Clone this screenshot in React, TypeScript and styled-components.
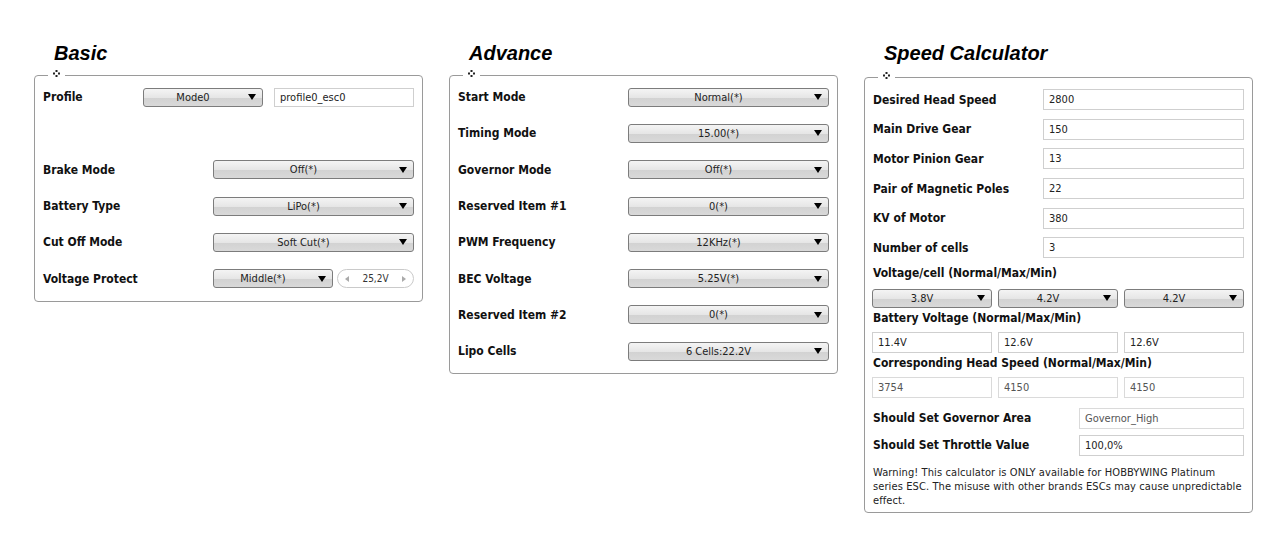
import React, { FC } from "react";
import styled, { createGlobalStyle } from "styled-components";

// global
const GlobalStyle = createGlobalStyle`
	html, body {
		margin: 0;
		padding: 0;
		background: #fff;
	}
	body {
		font-family: "DejaVu Sans Condensed", "DejaVu Sans", Tahoma, sans-serif;
		color: #000;
	}
`;

// layout
const Page = styled.div`
	display: flex;
	align-items: flex-start;
	gap: 26px;
	padding: 41px 0 0 34px;
`;

const Column = styled.section`
	width: 389px;
	display: flex;
	flex-direction: column;
`;

const Title = styled.h2`
	margin: 0 0 0 20px;
	height: 24px;
	line-height: 24px;
	font-family: "Liberation Sans", Arial, sans-serif;
	font-size: 20px;
	font-weight: bold;
	font-style: italic;
	color: #000;
`;

const Panel = styled.fieldset<{ $offset?: number; $padTop?: number }>`
	margin: ${(p) => 7 + (p.$offset || 0)}px 0 0 0;
	padding: ${(p) => p.$padTop ?? 1}px 8px 4px 8px;
	border: 1px solid #9a9a9a;
	border-radius: 4px;
	min-width: 0;
`;

const Legend = styled.legend`
	margin-left: 5px;
	padding: 0 5px;
	height: 6px;
	line-height: 0;

	svg {
		display: block;
		margin-top: -2px;
	}
`;

// rows
const Row = styled.div<{ $h?: number; $top?: number }>`
	display: flex;
	align-items: center;
	height: ${(p) => p.$h || 36.3}px;
	margin-top: ${(p) => p.$top || 0}px;
`;

const Label = styled.div<{ $w?: number }>`
	flex: 0 0 ${(p) => p.$w || 170}px;
	font-size: 12px;
	font-weight: bold;
	color: #111;
	white-space: nowrap;
`;

const Heading = styled.div`
	height: 20px;
	line-height: 20px;
	font-size: 12px;
	font-weight: bold;
	color: #111;
	white-space: nowrap;
`;

const Controls = styled.div<{ $gap?: number }>`
	display: flex;
	align-items: center;
	gap: ${(p) => p.$gap ?? 4}px;
`;

const Triple = styled.div<{ $top?: number }>`
	display: flex;
	gap: 6px;
	margin: ${(p) => p.$top ?? 4}px 0 0 -1px;
`;

// combo box
const Combo = styled.div<{ $w: number }>`
	box-sizing: border-box;
	width: ${(p) => p.$w}px;
	height: 19px;
	display: flex;
	align-items: center;
	border: 1px solid #7c7c7c;
	border-radius: 3px;
	background: linear-gradient(#f4f4f4 0%, #e6e6e6 50%, #d2d2d2 52%, #d9d9d9 100%);
	font-size: 11px;
	color: #222;
`;

const ComboText = styled.span`
	flex: 1;
	text-align: center;
	white-space: nowrap;
`;

const ComboArrow = styled.span`
	width: 0;
	height: 0;
	margin: 0 6px 0 6px;
	border-left: 4px solid transparent;
	border-right: 4px solid transparent;
	border-top: 6px solid #000;
`;

const Select: FC<{ w: number; value: string }> = ({ w, value }) => (
	<Combo $w={w}>
		<ComboText>{value}</ComboText>
		<ComboArrow />
	</Combo>
);

// text box
const TextBox = styled.input<{ $w: number; $h?: number; $muted?: boolean }>`
	box-sizing: border-box;
	width: ${(p) => p.$w}px;
	height: ${(p) => p.$h || 21}px;
	margin: 0;
	padding: 0 0 0 5px;
	border: 1px solid ${(p) => (p.$muted ? "#dadada" : "#cfcfcf")};
	border-radius: 0;
	background: #fff;
	font-family: inherit;
	font-size: 11px;
	color: ${(p) => (p.$muted ? "#555" : "#222")};
	outline: none;
`;

// spinner
const Spin = styled.div`
	box-sizing: border-box;
	width: 77px;
	height: 19px;
	display: flex;
	align-items: center;
	justify-content: space-between;
	padding: 0 7px;
	border: 1px solid #cacaca;
	border-radius: 10px;
	font-size: 10px;
	color: #333;
`;

const SpinArrow = styled.span<{ $dir: "left" | "right" }>`
	width: 0;
	height: 0;
	border-top: 3px solid transparent;
	border-bottom: 3px solid transparent;
	${(p) => (p.$dir === "left" ? "border-right: 4px solid #aaa;" : "border-left: 4px solid #aaa;")}
`;

const Warning = styled.p`
	margin: 7px -7px 0 0;
	font-size: 11px;
	line-height: 14px;
	letter-spacing: 0.1px;
	color: #222;
`;

const Diamond: FC = () => (
	<svg width="7" height="7" viewBox="0 0 7 7">
		<rect x="2.5" y="0" width="2" height="2" fill="#222" />
		<rect x="0" y="2.5" width="2" height="2" fill="#222" />
		<rect x="5" y="2.5" width="2" height="2" fill="#222" />
		<rect x="2.5" y="5" width="2" height="2" fill="#222" />
	</svg>
);

const advanceRows: [string, string][] = [
	["Start Mode", "Normal(*)"],
	["Timing Mode", "15.00(*)"],
	["Governor Mode", "Off(*)"],
	["Reserved Item #1", "0(*)"],
	["PWM Frequency", "12KHz(*)"],
	["BEC Voltage", "5.25V(*)"],
	["Reserved Item #2", "0(*)"],
	["Lipo Cells", "6 Cells:22.2V"],
];

const calcRows: [string, string][] = [
	["Desired Head Speed", "2800"],
	["Main Drive Gear", "150"],
	["Motor Pinion Gear", "13"],
	["Pair of Magnetic Poles", "22"],
	["KV of Motor", "380"],
	["Number of cells", "3"],
];

const App: FC = () => {
	return (
		<>
			<GlobalStyle />
			<Page>
				{/* Basic */}
				<Column>
					<Title>Basic</Title>
					<Panel>
						<Legend>
							<Diamond />
						</Legend>
						<Row>
							<Label $w={100}>Profile</Label>
							<Controls $gap={11}>
								<Select w={120} value="Mode0" />
								<TextBox $w={140} $h={19} readOnly value="profile0_esc0" />
							</Controls>
						</Row>
						<Row />
						<Row>
							<Label>Brake Mode</Label>
							<Select w={201} value="Off(*)" />
						</Row>
						<Row>
							<Label>Battery Type</Label>
							<Select w={201} value="LiPo(*)" />
						</Row>
						<Row>
							<Label>Cut Off Mode</Label>
							<Select w={201} value="Soft Cut(*)" />
						</Row>
						<Row>
							<Label>Voltage Protect</Label>
							<Controls>
								<Select w={120} value="Middle(*)" />
								<Spin>
									<SpinArrow $dir="left" />
									<span>25,2V</span>
									<SpinArrow $dir="right" />
								</Spin>
							</Controls>
						</Row>
					</Panel>
				</Column>

				{/* Advance */}
				<Column>
					<Title>Advance</Title>
					<Panel>
						<Legend>
							<Diamond />
						</Legend>
						{advanceRows.map(([label, value]) => (
							<Row key={label}>
								<Label>{label}</Label>
								<Select w={201} value={value} />
							</Row>
						))}
					</Panel>
				</Column>

				{/* Speed Calculator */}
				<Column>
					<Title>Speed Calculator</Title>
					<Panel $offset={2} $padTop={5}>
						<Legend>
							<Diamond />
						</Legend>
						{calcRows.map(([label, value]) => (
							<Row key={label} $h={29.6}>
								<Label>{label}</Label>
								<TextBox $w={201} readOnly value={value} />
							</Row>
						))}
						<Heading>Voltage/cell (Normal/Max/Min)</Heading>
						<Triple $top={6}>
							<Select w={120} value="3.8V" />
							<Select w={120} value="4.2V" />
							<Select w={120} value="4.2V" />
						</Triple>
						<Heading>Battery Voltage (Normal/Max/Min)</Heading>
						<Triple>
							<TextBox $w={120} readOnly value="11.4V" />
							<TextBox $w={120} readOnly value="12.6V" />
							<TextBox $w={120} readOnly value="12.6V" />
						</Triple>
						<Heading>Corresponding Head Speed (Normal/Max/Min)</Heading>
						<Triple>
							<TextBox $w={120} $muted readOnly value="3754" />
							<TextBox $w={120} $muted readOnly value="4150" />
							<TextBox $w={120} $muted readOnly value="4150" />
						</Triple>
						<Row $h={27} $top={7}>
							<Label $w={206}>Should Set Governor Area</Label>
							<TextBox $w={165} $muted readOnly value="Governor_High" />
						</Row>
						<Row $h={27}>
							<Label $w={206}>Should Set Throttle Value</Label>
							<TextBox $w={165} readOnly value="100,0%" />
						</Row>
						<Warning>
							Warning! This calculator is ONLY available for HOBBYWING Platinum
							<br />
							series ESC. The misuse with other brands ESCs may cause unpredictable effect.
						</Warning>
					</Panel>
				</Column>
			</Page>
		</>
	);
};

export default App;
